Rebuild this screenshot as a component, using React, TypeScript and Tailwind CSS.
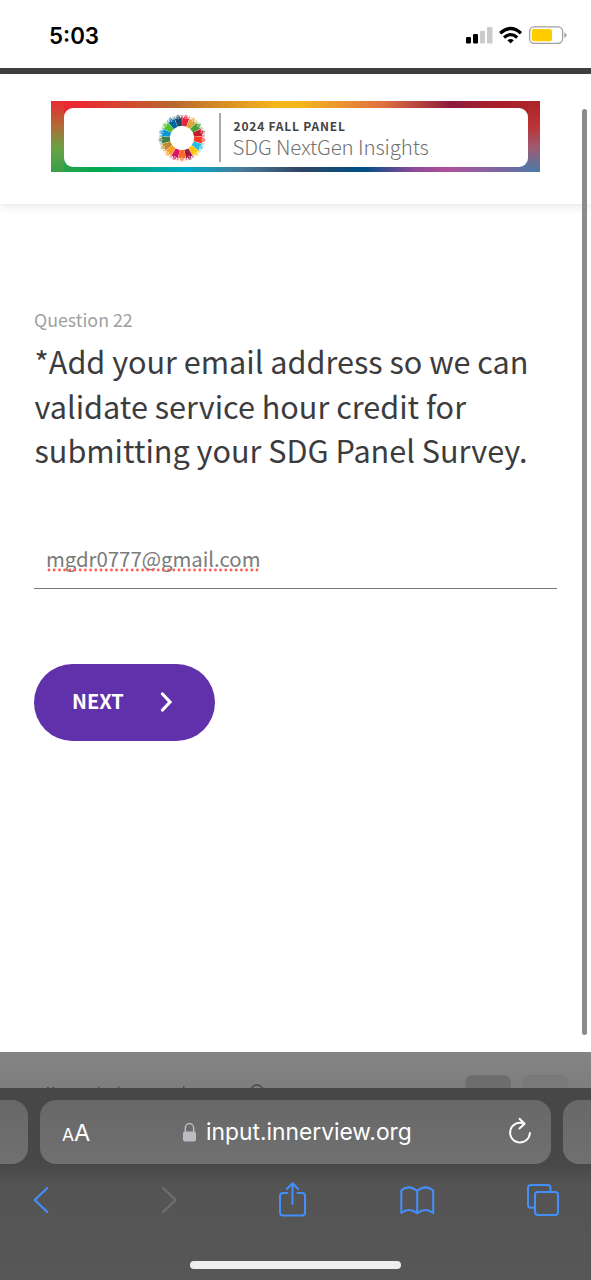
const sans = "font-['Noto_Sans_CJK_SC',sans-serif]";

const goals = [
  '#E5243B', '#DDA63A', '#4C9F38', '#C5192D', '#FF3A21', '#26BDE2', '#FCC30B', '#A21942', '#FD6925',
  '#DD1367', '#FD9D24', '#BF8B2E', '#3F7E44', '#0A97D9', '#56C02B', '#00689D', '#19486A',
];

function GoalWheel() {
  return (
    <svg width="50" height="50" viewBox="-25 -25 50 50" className="shrink-0">
      {goals.map((color, i) => (
        <g key={color} transform={`rotate(${(i + 0.5) * (360 / 17)})`}>
          <path d="M-2.2 -12 L-3.6 -20.6 L-1.8 -20 L-1.6 -21.5 L1.6 -21.5 L1.8 -20 L3.6 -20.6 L2.2 -12 Z" fill={color} />
          <circle cx="0" cy="-22" r="1.7" fill={color} fillOpacity="0.5" />
          <path d="M-3.5 -20.5 L-3 -22.8 M3.5 -20.5 L3 -22.8" stroke={color} strokeOpacity="0.55" strokeWidth="1" />
          <circle cx="0" cy="-20.2" r="1" fill="#fff" fillOpacity="0.5" />
        </g>
      ))}
    </svg>
  );
}

function StatusBar() {
  return (
    <div className="flex h-[68px] shrink-0 items-start justify-between pl-[49px] pr-[24px] pt-[22px]">
      <span className="font-['Inter',sans-serif] text-[22.3px] font-semibold leading-[28px] text-black">5:03</span>
      <div className="flex pt-[4px]">
        <svg width="102" height="20" viewBox="0 0 102 20">
          <rect x="1" y="11" width="5" height="6.5" rx="1.2" fill="#000" />
          <rect x="8" y="8" width="5" height="9.5" rx="1.2" fill="#000" />
          <rect x="15" y="4.7" width="5" height="12.8" rx="1.2" fill="#cbcbcb" />
          <rect x="22" y="1" width="5.5" height="16.5" rx="1.2" fill="#cbcbcb" />
          <g fill="none" stroke="#000" strokeWidth="3.2">
            <path d="M35.2 7.2 Q45.6 -2.2 56 7.2" />
            <path d="M39 11.5 Q45.6 5.8 52.2 11.5" />
          </g>
          <path d="M42.4 14.2 Q45.6 11.8 48.8 14.2 L45.6 17.5 Z" fill="#000" />
          <rect x="64.6" y="0.9" width="33" height="16.4" rx="4.5" fill="none" stroke="#a0a0a0" strokeWidth="1.3" />
          <rect x="66.8" y="3.1" width="20.2" height="12.2" rx="2" fill="#ffcc00" />
          <path d="M99.4 6.4 Q101.6 7.4 101.6 9.2 Q101.6 11 99.4 12 Z" fill="#a0a0a0" />
        </svg>
      </div>
    </div>
  );
}

function Banner() {
  return (
    <div className="flex h-[71px] w-[489px] bg-[linear-gradient(180deg,#ea2a33_0%,#b06a35_35%,#6da045_65%,#38a048_100%),linear-gradient(180deg,#ad2327_0%,#b93335_35%,#a05a70_65%,#4a7aab_100%),linear-gradient(90deg,#ea2a33_0%,#ea2a33_6%,#b8682c_25%,#f5b51c_46%,#f5b51c_51%,#e07040_68%,#8c1a3b_82%,#a81f2a_90%,#ad2327_100%),linear-gradient(90deg,#38a048_0%,#00a850_10%,#00a9c8_28%,#4a7a98_39%,#2f4563_51%,#005088_64%,#8a4a98_74%,#b0509b_81%,#7a68a0_92%,#4a7aab_100%)] bg-[size:13px_100%,12px_100%,100%_50%,100%_50%] bg-[position:left_top,right_top,left_top,left_bottom] bg-no-repeat pb-[5px] pl-[13px] pr-[12px] pt-[7px]">
      <div className="flex flex-1 items-center rounded-[9px] bg-white pl-[93px]">
        <GoalWheel />
        <div className="ml-[12px] h-[49px] w-[1.5px] shrink-0 bg-[#a9a9a9]" />
        <div className={`${sans} ml-[12px] flex flex-col whitespace-nowrap pt-px`}>
          <span className="pl-px text-[12px] font-bold leading-[16px] tracking-[0.8px] text-[#444]">2024 FALL PANEL</span>
          <span className="text-[20.5px] font-light leading-[24px] tracking-[-0.13px] text-[#707070]">SDG NextGen Insights</span>
        </div>
      </div>
    </div>
  );
}

function AddressBar() {
  return (
    <div className="flex h-[64px] justify-between">
      <div className="w-[28px] rounded-r-[16px] bg-[linear-gradient(#686868,#707070)]" />
      <div className="flex w-[511px] items-center rounded-[16px] bg-[linear-gradient(#686868,#707070)] pl-[22px] pr-[19px] font-['Inter',sans-serif] text-white">
        <div className="flex w-[120px] items-baseline pt-[3px]">
          <span className="text-[17.5px] leading-[28px]">A</span>
          <span className="text-[23.5px] leading-[28px]">A</span>
        </div>
        <svg width="15" height="21" viewBox="0 0 15 21" className="shrink-0">
          <path d="M3.3 10 V6.2 a4.2 4.6 0 0 1 8.4 0 V10" fill="none" stroke="#bcbbc2" strokeWidth="1.5" />
          <rect x="1" y="9.4" width="13" height="10" rx="2" fill="#bcbbc2" />
        </svg>
        <span className="ml-[9px] whitespace-nowrap text-[22.8px] leading-[28px]">input.innerview.org</span>
        <svg width="24" height="28" viewBox="0 0 24 28" className="relative -top-px ml-auto" fill="none" stroke="#fff" strokeWidth="1.9" strokeLinecap="round" strokeLinejoin="round">
          <path d="M16 6.6 A9.9 9.9 0 1 0 21.9 16" />
          <path d="M11.5 1.8 L16.6 6.8 L11.5 11.5" />
        </svg>
      </div>
      <div className="w-[28px] rounded-l-[16px] bg-[linear-gradient(#686868,#707070)]" />
    </div>
  );
}

function Toolbar() {
  return (
    <svg width="591" height="48" viewBox="0 1176 591 48" fill="none" stroke="#438ffb" strokeWidth="2" strokeLinecap="round" strokeLinejoin="round">
      <path strokeWidth="2.2" d="M47.3 1188 L34.7 1200 L47.3 1212" />
      <path stroke="#6f6f6f" strokeWidth="2.2" d="M163 1188 L175.8 1200 L163 1212" />
      <path d="M287.5 1193 H283 Q280 1193 280 1196 V1212.5 Q280 1215.5 283 1215.5 H302 Q305 1215.5 305 1212.5 V1196 Q305 1193 302 1193 H297.5 M292.5 1204 V1183.5 M286.8 1189 L292.5 1183.3 L298.2 1189" />
      <path d="M417.2 1191 Q409 1184 401.3 1190.5 V1213 Q409 1207 417.2 1213.2 Q425.5 1207 433.2 1213 V1190.5 Q425.5 1184 417.2 1191 V1213.2" />
      <rect x="535" y="1192" width="23" height="23" rx="3" />
      <path d="M534.5 1207.8 H531 Q528 1207.8 528 1204.8 V1188 Q528 1185 531 1185 H547.5 Q550.5 1185 550.5 1188 V1191.5" />
    </svg>
  );
}

export default function App() {
  return (
    <div className="relative flex h-[1280px] w-[591px] flex-col overflow-hidden bg-white">
      <StatusBar />
      <div className="h-[6px] shrink-0 bg-[#404042]" />
      <header className="flex h-[130px] shrink-0 justify-center pt-[27px] shadow-[0_2px_10px_rgba(0,0,0,0.1)]">
        <Banner />
      </header>
      <main className={`${sans} flex h-[848px] shrink-0 flex-col items-start pl-[34px] pr-[34px] pt-[102px]`}>
        <p className="text-[17.8px] leading-[26px] text-[#a0a0a0]">Question 22</p>
        <h1 className="mt-[7px] whitespace-nowrap pl-[0.5px] text-[30.6px] leading-[44.5px] text-[#3c3c3e]">
          *Add your email address so we can
          <br />
          validate service hour credit for
          <br />
          submitting your SDG Panel Survey.
        </h1>
        <div className="mt-[57px] flex h-[59px] w-[523px] items-start border-b-[1.5px] border-[#757575] pl-[12px] pt-[13px]">
          <div className="relative text-[20.35px] leading-[30px] text-[#7b7b7b]">
            mgdr0777@gmail.com
            <svg width="214" height="4" className="absolute left-[1px] top-[25px]">
              <path d="M2 2 H212" stroke="#ff5a55" strokeWidth="2.8" strokeLinecap="round" strokeDasharray="0 5.2" />
            </svg>
          </div>
        </div>
        <button className="mt-[75px] flex h-[77px] w-[181px] items-center rounded-full bg-[#6131ac] pl-[38px] text-[20px] font-bold text-white">
          <span className="w-[88px] pb-[2px] text-left">NEXT</span>
          <svg width="13" height="20" viewBox="0 0 13 20" fill="none" stroke="#fff" strokeWidth="3.2" strokeLinecap="round">
            <path d="M2.5 2 L10 10 L2.5 18" />
          </svg>
        </button>
      </main>
      <div className="flex h-[36px] shrink-0 items-end overflow-hidden bg-[linear-gradient(#848484,#7e7e7e)]">
        <svg width="591" height="14" viewBox="0 1074 591 14">
          <g fill="#4b4b4b">
            <rect x="47" y="1087" width="2" height="1" />
            <rect x="52" y="1087" width="2" height="1" />
            <rect x="98" y="1086.5" width="1.5" height="2" />
            <rect x="118" y="1086.5" width="1.5" height="2" />
            <rect x="183" y="1086.5" width="1.5" height="2" />
          </g>
          <circle cx="257" cy="1091.5" r="6.5" fill="none" stroke="#4b4b4b" strokeWidth="1.4" />
          <rect x="465.5" y="1075" width="45.5" height="30" rx="7" fill="#6d6d6d" />
          <rect x="522.5" y="1075" width="45.5" height="30" rx="7" fill="#797979" />
        </svg>
      </div>
      <footer className="flex h-[192px] shrink-0 flex-col items-center bg-[linear-gradient(#474747,#484848_40%,#545454_50%,#575757)] pt-[12px]">
        <div className="w-full">
          <AddressBar />
        </div>
        <div className="mt-[12px]">
          <Toolbar />
        </div>
        <div className="mt-[37px] h-[8px] w-[211px] rounded-full bg-[#eee]" />
      </footer>
      <div className="absolute left-[582px] top-[109px] h-[926px] w-[5px] rounded-full bg-[#8c8c8c]" />
    </div>
  );
}
